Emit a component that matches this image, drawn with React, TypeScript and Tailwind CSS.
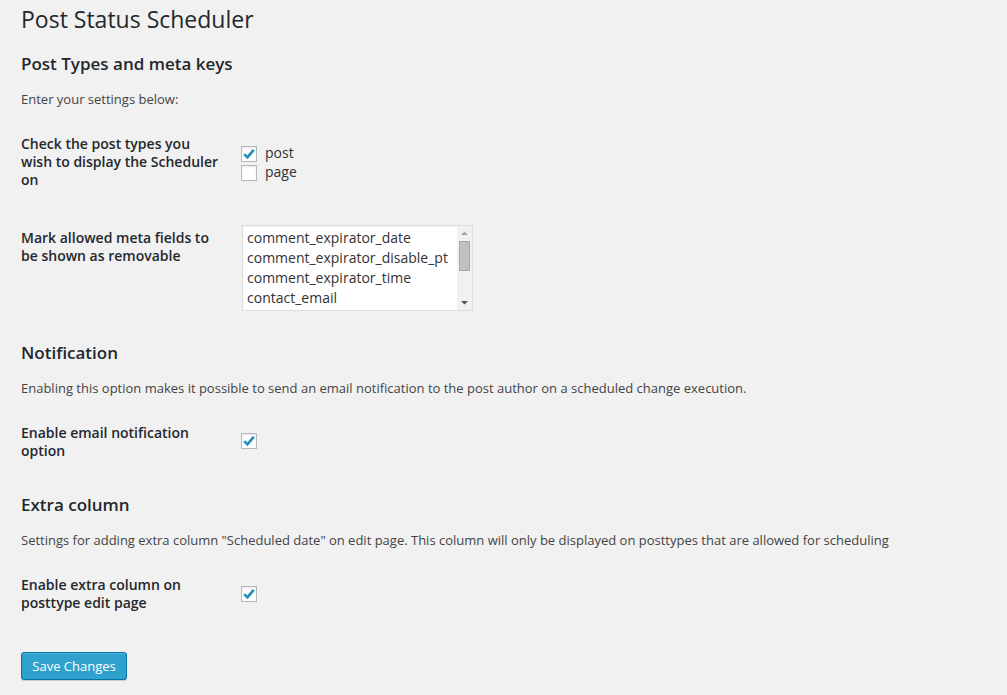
import type React from 'react';

const metaFields = [
  'comment_expirator_date',
  'comment_expirator_disable_pt',
  'comment_expirator_time',
  'contact_email',
];

function Checkbox({ checked = false }: { checked?: boolean }) {
  return (
    <span className="w-4 h-4 shrink-0 bg-white border border-[#b4b9be] shadow-[inset_0_1px_2px_rgba(0,0,0,0.1)] flex items-center justify-center">
      {checked && (
        <svg width="14" height="14" viewBox="0 0 14 14" className="block">
          <path d="M2.2 7.2 L5.4 10.4 L11.8 2.8" fill="none" stroke="#1e8cbe" strokeWidth="2.6" strokeLinecap="butt" />
        </svg>
      )}
    </span>
  );
}

function Row({ label, offset, children }: { label: React.ReactNode; offset: string; children: React.ReactNode }) {
  return (
    <div className="flex">
      <div className="w-[220px] shrink-0 pr-[10px] text-[14px] leading-[18px] font-semibold text-[#23282d]">{label}</div>
      <div className={offset}>{children}</div>
    </div>
  );
}

export default function App() {
  return (
    <div
      className="min-h-[695px] bg-[#f1f1f1] px-[21px] pt-[4px] text-[#444]"
      style={{ fontFamily: '"Open Sans", "Liberation Sans", sans-serif' }}
    >
      <h1 className="text-[23px] leading-[30px] font-normal text-[#23282d]">Post Status Scheduler</h1>

      {/* Post types */}
      <h2 className="mt-[18px] text-[17px] leading-[24px] font-semibold text-[#23282d]">Post Types and meta keys</h2>
      <p className="mt-[13px] text-[13px] leading-[20px]">Enter your settings below:</p>

      <div className="mt-[26px]">
        <Row label={<>Check the post types you<br />wish to display the Scheduler<br />on</>} offset="pt-[11px]">
          <div className="flex flex-col gap-[3px]">
            <label className="flex items-center gap-2 text-[14px] leading-[16px] text-[#333]">
              <Checkbox checked />
              <span className="-mt-[2px]">post</span>
            </label>
            <label className="flex items-center gap-2 text-[14px] leading-[16px] text-[#333]">
              <Checkbox />
              <span className="-mt-[3px]">page</span>
            </label>
          </div>
        </Row>
      </div>

      <div className="mt-[36px] flex">
        <div className="w-[221px] shrink-0 pt-[4px] pr-[10px] text-[14px] leading-[18px] font-semibold text-[#23282d]">
          Mark allowed meta fields to<br />be shown as removable
        </div>
        <div className="w-[231px] h-[86px] bg-white border border-[#ddd] shadow-[inset_0_1px_2px_rgba(0,0,0,0.07)] flex">
          <ul className="flex-1 pt-[2px] pl-[4px] text-[14px] leading-[20px] text-[#333] overflow-hidden whitespace-nowrap">
            {metaFields.map((f) => (
              <li key={f}>{f}</li>
            ))}
          </ul>
          <div className="w-[15px] bg-[#f1f1f1] flex flex-col items-center">
            <svg width="15" height="15" viewBox="0 0 15 15" className="block">
              <path d="M4 9 L7.5 5.5 L11 9 Z" fill="#a3a3a3" />
            </svg>
            <div className="w-[11px] h-[30px] bg-[#c1c1c1] border border-[#a9a9a9]" />
            <div className="flex-1" />
            <svg width="15" height="15" viewBox="0 0 15 15" className="block">
              <path d="M4 6 L7.5 9.5 L11 6 Z" fill="#505050" />
            </svg>
          </div>
        </div>
      </div>

      {/* Notification */}
      <h2 className="mt-[30px] text-[17px] leading-[24px] font-semibold text-[#23282d]">Notification</h2>
      <p className="mt-[13px] text-[13px] leading-[20px]">
        Enabling this option makes it possible to send an email notification to the post author on a scheduled change execution.
      </p>
      <div className="mt-[26px]">
        <Row label={<>Enable email notification<br />option</>} offset="pt-[9px]">
          <Checkbox checked />
        </Row>
      </div>

      {/* Extra column */}
      <h2 className="mt-[33px] text-[17px] leading-[24px] font-semibold text-[#23282d]">Extra column</h2>
      <p className="mt-[13px] text-[13px] leading-[20px]">
        Settings for adding extra column "Scheduled date" on edit page. This column will only be displayed on posttypes that are allowed for scheduling
      </p>
      <div className="mt-[26px]">
        <Row label={<>Enable extra column on<br />posttype edit page</>} offset="pt-[10px]">
          <Checkbox checked />
        </Row>
      </div>

      <button
        type="button"
        className="mt-[40px] w-[106px] h-[28px] rounded-[3px] bg-[#2ea2cc] border border-[#0074a2] text-white text-[13px] leading-[26px] shadow-[inset_0_1px_0_rgba(120,200,230,0.5),0_1px_0_rgba(0,0,0,0.15)]"
      >
        Save Changes
      </button>
    </div>
  );
}
